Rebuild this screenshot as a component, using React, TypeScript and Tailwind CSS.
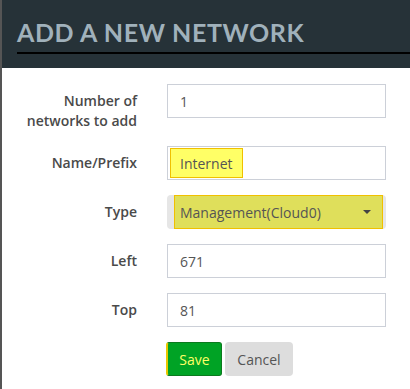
import { useState } from "react"

const body = { fontFamily: '"Open Sans", "Noto Sans", sans-serif' }

function Row({
  label,
  children,
}: {
  label: React.ReactNode
  children: React.ReactNode
}) {
  return (
    <div className="flex items-start gap-[30px] mb-[15px]">
      <label className="w-[135px] shrink-0 text-right pt-[7px] text-[14px] leading-[20px] font-semibold text-[#4a4a4a]">
        {label}
      </label>
      {children}
    </div>
  )
}

function TextInput({ value }: { value: string }) {
  const [v, setV] = useState(value)
  return (
    <input
      className="w-[219px] h-[34px] border border-[#ccd0d8] bg-white px-[12px] text-[14px] text-[#555] outline-none"
      value={v}
      onChange={(e) => setV(e.target.value)}
    />
  )
}

export default function App() {
  return (
    <div
      className="w-[410px] h-[389px] bg-white border-l-2 border-[#555] overflow-hidden"
      style={body}
    >
      <div className="h-[68px] bg-[#263238] pt-[19px]">
        <div className="ml-[15px] border-b-2 border-black pb-[6px]">
          <h1
            className="text-[25px] leading-[27px] font-bold text-[#a0b1bb] tracking-[0.6px]"
            style={{ fontFamily: "Lato, sans-serif" }}
          >
            ADD A NEW NETWORK
          </h1>
        </div>
      </div>

      <form className="pt-[16px]">
        <Row
          label={
            <>
              Number of
              <br />
              networks to add
            </>
          }
        >
          <TextInput value="1" />
        </Row>

        <Row label="Name/Prefix">
          <div className="w-[219px] h-[34px] border border-[#ccd0d8] bg-white pl-[2px] py-[1px] flex items-stretch">
            <span className="px-[9px] bg-[#ffff66] border border-[#f0c000] text-[14px] text-[#555] flex items-center">
              Internet
            </span>
          </div>
        </Row>

        <Row label="Type">
          <div className="w-[219px] h-[34px] rounded-[4px] bg-[#e6e6e6] pl-[7px] pr-[3px] flex">
            <div className="flex-1 flex items-center justify-between bg-[#dfdf5b] border border-[#f0c000] pl-[5px] pr-[11px]">
              <span className="text-[14px] text-[#555]">Management(Cloud0)</span>
              <span className="w-0 h-0 border-l-[4px] border-r-[4px] border-t-[4px] border-l-transparent border-r-transparent border-t-[#444]" />
            </div>
          </div>
        </Row>

        <Row label="Left">
          <TextInput value="671" />
        </Row>

        <Row label="Top">
          <TextInput value="81" />
        </Row>

        <div className="flex gap-[3px] pl-[164px]">
          <button
            type="button"
            className="h-[34px] w-[56px] rounded-[3px] bg-[#00a325] border border-[#0b7a1e] border-l-2 border-l-[#e8c800] text-[14px] text-[#ffff66]"
          >
            Save
          </button>
          <button
            type="button"
            className="h-[34px] w-[68px] rounded-[4px] bg-[#dddddd] text-[14px] text-[#555]"
          >
            Cancel
          </button>
        </div>
      </form>
    </div>
  )
}
